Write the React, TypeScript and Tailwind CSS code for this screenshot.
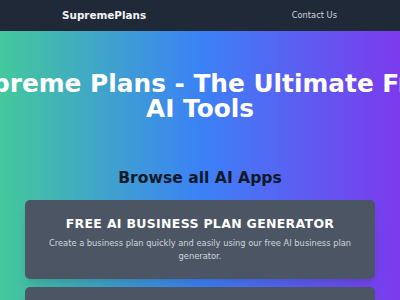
import React from "react";

export default function App() {
  return (
    <div className="min-h-[300px] w-[400px] overflow-hidden font-['DejaVu_Sans',sans-serif]">
      <header className="flex h-[31px] items-center justify-between bg-[#1f2937] pl-[62px] pr-[63px]">
        <span className="text-[10.4px] font-bold leading-none text-[#f3f4f6]">SupremePlans</span>
        <span className="text-[8.3px] leading-none text-[#d1d5db]">Contact Us</span>
      </header>
      <main className="bg-[linear-gradient(to_right,#44c89c,#3b82f6,#7c3aed)] pt-[41px] pb-[40px]">
        <div className="flex justify-center">
          <h1 className="whitespace-nowrap text-center text-[24.8px] font-bold leading-[24.5px] text-white">
            Supreme Plans - The Ultimate Free
            <br />
            AI Tools
          </h1>
        </div>
        <h2 className="mt-[48px] text-center text-[15.6px] font-bold leading-[18.75px] text-[#111827]">
          Browse all AI Apps
        </h2>
        <div className="mx-auto mt-[12px] flex w-[350px] flex-col gap-[8.5px]">
          <div className="rounded-[5px] bg-[#4b5563] px-[16.6px] py-[16.5px] text-center shadow-lg">
            <h3 className="text-[12.5px] font-bold uppercase leading-[16.6px] tracking-[0.31px] text-white">
              Free AI Business Plan Generator
            </h3>
            <p className="mt-[4.2px] text-[8.3px] leading-[12.5px] text-[#d1d5db]">
              Create a business plan quickly and easily using our free AI business plan generator.
            </p>
          </div>
          <div className="rounded-[5px] bg-[#4b5563] px-[16.6px] py-[16.5px] text-center shadow-lg">
            <h3 className="text-[12.5px] font-bold uppercase leading-[16.6px] tracking-[0.31px] text-white">
              Free AI Marketing Plan Generator
            </h3>
            <p className="mt-[4.2px] text-[8.3px] leading-[12.5px] text-[#d1d5db]">
              Create a marketing plan quickly and easily using our free AI marketing plan generator.
            </p>
          </div>
        </div>
      </main>
    </div>
  );
}
